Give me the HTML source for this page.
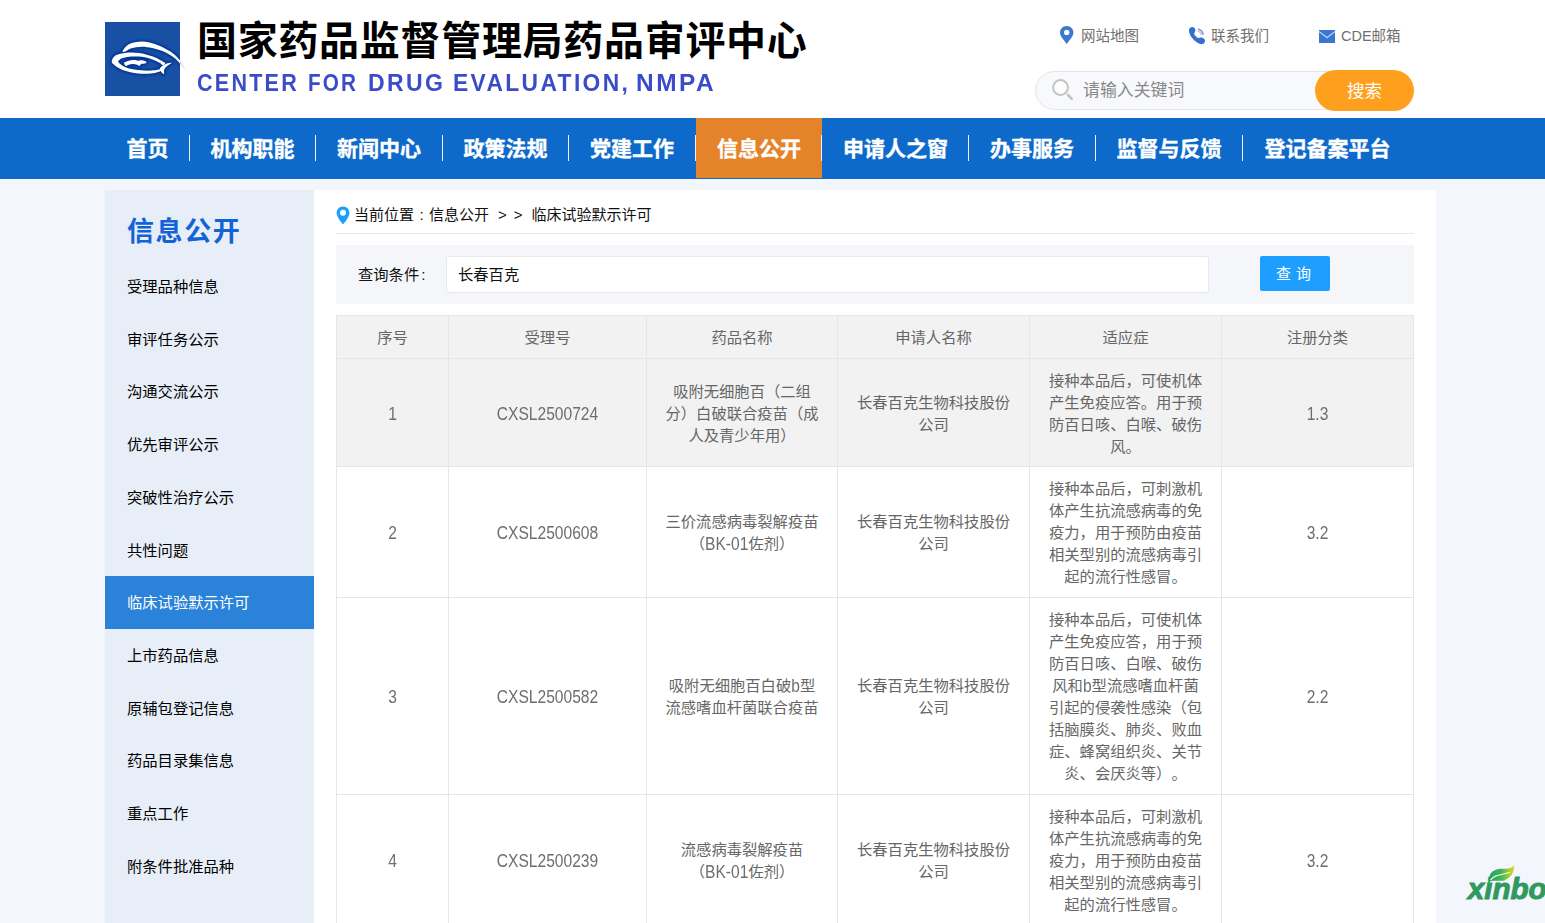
<!DOCTYPE html>
<html lang="zh-CN">
<head>
<meta charset="utf-8">
<title>国家药品监督管理局药品审评中心</title>
<style>
*{box-sizing:border-box;margin:0;padding:0}
html,body{width:1545px;height:923px;overflow:hidden;background:#f3f7fd}
body{font-family:"Liberation Sans","Noto Sans CJK SC",sans-serif;color:#333;position:relative;text-spacing-trim:space-all}
.abs{position:absolute}
#header{position:absolute;left:0;top:0;width:1545px;height:118px;background:#fff}
#logo{position:absolute;left:105px;top:22px}
#title-cn{position:absolute;left:197px;top:14px;height:54px;line-height:54px;font-size:40px;font-weight:700;color:#000;letter-spacing:0.7px;white-space:nowrap}
#title-en{position:absolute;left:0;top:69px;height:28px;line-height:28px;font-size:24px;font-weight:bold;color:#3a4cc8;letter-spacing:2.5px;white-space:nowrap}
#title-en span{position:absolute;top:0;transform-origin:0 0}
.toplink{position:absolute;top:25px;height:22px;line-height:22px;font-size:14.5px;color:#707070;white-space:nowrap}
#search{position:absolute;left:1035px;top:71px;width:330px;height:39px;border:1px solid #e4e4e4;border-radius:20px;background:#f8f9fd}
#search span{position:absolute;left:47px;top:0;line-height:37px;font-size:16.9px;color:#888}
#sbtn{position:absolute;left:1315px;top:70px;width:99px;height:41px;border-radius:21px;background:#ff9f1e;color:#fff;font-size:17.5px;line-height:43px;text-align:center}
#nav{position:absolute;left:0;top:118px;width:1545px;height:61px;background:#0d6aca}
.nv{-webkit-text-stroke:0.35px #fff;position:absolute;top:0;height:61px;line-height:62px;font-size:21px;font-weight:bold;color:#fff;text-align:center;white-space:nowrap}
.sep{position:absolute;top:17px;width:1px;height:26px;background:#eef4fc}
#side{position:absolute;left:105px;top:190px;width:209px;height:740px;background:#e8eef7}
#side h2{position:absolute;left:22px;top:24px;font-size:27px;line-height:36px;font-weight:bold;color:#1262d8;letter-spacing:1.6px;white-space:nowrap}
.mi{position:absolute;left:0;width:209px;height:53px;line-height:53px;padding-left:22px;font-size:15.3px;color:#000;white-space:nowrap}
.mi.on{background:#2a82d9;color:#fff}
#main{position:absolute;left:314px;top:190px;width:1122px;height:740px;background:#fff}

#crumb{position:absolute;left:40px;top:14px;height:22px;line-height:22px;font-size:15px;color:#111;white-space:nowrap}
#crumbline{position:absolute;left:22px;top:43px;width:1078px;height:1px;background:#e6e6e6}
#query{position:absolute;left:22px;top:55px;width:1078px;height:59px;background:#f5f6fa}
#query label{position:absolute;left:22px;top:19px;line-height:22px;font-size:15.3px;color:#111;white-space:nowrap}
#qinput{position:absolute;left:110px;top:11px;width:763px;height:37px;border:1px solid #e9e9e9;border-radius:3px;background:#fff;padding-left:11px;line-height:36px;font-size:15.3px;color:#111}
#qbtn{padding-right:3px;word-spacing:1px;position:absolute;left:924px;top:11px;width:70px;height:35px;background:#1e9fff;border-radius:2px;color:#fff;font-size:15px;line-height:35px;text-align:center}
table{position:absolute;left:22px;top:125px;width:1078px;border-collapse:collapse;table-layout:fixed}
th,td{border:1px solid #e6e6e6;font-size:15.3px;line-height:22px;color:#666;text-align:center;font-weight:normal;padding:2px 17px 0;vertical-align:middle}
thead tr,tr.hov{background:#f2f2f2}
.l{display:inline-block;font-size:15.6px;transform:scaleY(1.13);color:#6e6e6e}
</style>
</head>
<body>
<div id="header">
  <svg id="logo" width="90" height="74" viewBox="0 0 90 74" style="overflow:visible">
    <defs>
      <linearGradient id="lg1" gradientUnits="userSpaceOnUse" x1="60" y1="0" x2="83" y2="0"><stop offset="0" stop-color="#fff"/><stop offset="0.645" stop-color="#fff"/><stop offset="0.66" stop-color="#cbd7ef"/><stop offset="1" stop-color="#dfe7f6" stop-opacity="0.15"/></linearGradient>
      <filter id="lb" x="-10%" y="-10%" width="120%" height="120%"><feGaussianBlur stdDeviation="0.5"/></filter>
      <filter id="lb2" x="-20%" y="-20%" width="140%" height="140%"><feGaussianBlur stdDeviation="1"/></filter>
      <clipPath id="lc"><rect width="75" height="74"/></clipPath>
    </defs>
    <rect width="75" height="74" fill="#1850a4"/>
    <g clip-path="url(#lc)" filter="url(#lb2)" fill="#06308f" stroke="#06308f" stroke-width="3.200" opacity="0.9">
      <path d="M17.56 29.08C18.17 27.87 21.03 23.88 23.80 22.32C26.57 20.76 30.73 20.02 34.20 19.72C37.67 19.42 41.13 19.81 44.60 20.50C48.07 21.19 51.54 22.36 55.00 23.88C58.47 25.40 62.46 27.61 65.40 29.60C68.35 31.59 70.52 33.59 72.68 35.84C74.85 38.09 77.02 40.78 78.40 43.12C79.79 45.46 81.26 49.75 81.00 49.88C80.74 50.01 78.75 46.20 76.84 43.90C74.94 41.60 72.60 38.48 69.56 36.10C66.53 33.72 62.37 31.27 58.64 29.60C54.92 27.93 50.84 26.89 47.20 26.06C43.56 25.24 40.27 24.63 36.80 24.66C33.33 24.69 29.17 25.40 26.40 26.22C23.63 27.04 21.63 29.12 20.16 29.60C18.69 30.08 16.95 30.29 17.56 29.08Z"/><path d="M6.90 38.44C7.33 36.97 8.42 34.54 10.80 33.24C13.18 31.94 17.30 31.03 21.20 30.64C25.10 30.25 29.87 30.29 34.20 30.90C38.53 31.51 43.73 33.11 47.20 34.28C50.67 35.45 52.84 36.79 55.00 37.92C57.17 39.05 59.77 40.17 60.20 41.04C60.64 41.91 58.47 43.12 57.60 43.12C56.74 43.12 56.74 41.99 55.00 41.04C53.27 40.09 50.24 38.44 47.20 37.40C44.17 36.36 40.27 35.28 36.80 34.80C33.33 34.32 29.43 34.37 26.40 34.54C23.37 34.71 20.55 35.32 18.60 35.84C16.65 36.36 15.61 37.04 14.70 37.66C13.79 38.28 13.10 38.89 13.14 39.59C13.18 40.28 14.05 41.06 14.96 41.82C15.87 42.58 16.69 43.29 18.60 44.16C20.51 45.03 22.93 46.28 26.40 47.02C29.87 47.76 35.50 48.36 39.40 48.58C43.30 48.80 47.29 48.54 49.80 48.32C52.32 48.10 53.62 47.11 54.48 47.28C55.35 47.45 55.78 48.75 55.00 49.36C54.22 49.97 52.40 50.53 49.80 50.92C47.20 51.31 43.30 51.79 39.40 51.70C35.50 51.61 30.30 51.14 26.40 50.40C22.50 49.66 19.03 48.67 16.00 47.28C12.97 45.89 9.72 43.55 8.20 42.08C6.68 40.61 6.47 39.91 6.90 38.44Z"/><path d="M66.96 40.78C66.83 40.42 63.32 41.08 61.76 41.56C60.20 42.04 58.73 42.86 57.60 43.64C56.48 44.42 55.35 45.29 55.00 46.24C54.66 47.19 54.87 48.36 55.52 49.36C56.17 50.36 58.31 52.35 58.90 52.22C59.49 52.09 58.86 49.62 59.06 48.58C59.26 47.54 59.52 46.79 60.10 45.98C60.68 45.18 61.40 44.61 62.54 43.75C63.69 42.88 67.09 41.15 66.96 40.78Z"/><path d="M19.12 41.56C18.99 40.89 19.21 40.52 20.16 40.00C21.11 39.48 23.19 38.77 24.84 38.44C26.49 38.11 28.74 37.98 30.04 38.02C31.34 38.07 31.60 38.67 32.64 38.70C33.68 38.73 35.07 38.14 36.28 38.18C37.49 38.22 39.05 38.61 39.92 38.96C40.79 39.31 41.46 39.83 41.48 40.26C41.50 40.69 40.81 41.30 40.03 41.56C39.25 41.82 37.77 41.43 36.80 41.82C35.83 42.21 34.98 43.73 34.20 43.90C33.42 44.07 33.25 43.16 32.12 42.86C30.99 42.56 28.83 42.08 27.44 42.08C26.05 42.08 24.88 42.53 23.80 42.86C22.72 43.19 21.72 44.27 20.94 44.06C20.16 43.84 19.25 42.24 19.12 41.56Z"/>
    </g>
    <g filter="url(#lb)">
      <path d="M17.56 29.08C18.17 27.87 21.03 23.88 23.80 22.32C26.57 20.76 30.73 20.02 34.20 19.72C37.67 19.42 41.13 19.81 44.60 20.50C48.07 21.19 51.54 22.36 55.00 23.88C58.47 25.40 62.46 27.61 65.40 29.60C68.35 31.59 70.52 33.59 72.68 35.84C74.85 38.09 77.02 40.78 78.40 43.12C79.79 45.46 81.26 49.75 81.00 49.88C80.74 50.01 78.75 46.20 76.84 43.90C74.94 41.60 72.60 38.48 69.56 36.10C66.53 33.72 62.37 31.27 58.64 29.60C54.92 27.93 50.84 26.89 47.20 26.06C43.56 25.24 40.27 24.63 36.80 24.66C33.33 24.69 29.17 25.40 26.40 26.22C23.63 27.04 21.63 29.12 20.16 29.60C18.69 30.08 16.95 30.29 17.56 29.08Z" fill="url(#lg1)"/>
      <path d="M6.90 38.44C7.33 36.97 8.42 34.54 10.80 33.24C13.18 31.94 17.30 31.03 21.20 30.64C25.10 30.25 29.87 30.29 34.20 30.90C38.53 31.51 43.73 33.11 47.20 34.28C50.67 35.45 52.84 36.79 55.00 37.92C57.17 39.05 59.77 40.17 60.20 41.04C60.64 41.91 58.47 43.12 57.60 43.12C56.74 43.12 56.74 41.99 55.00 41.04C53.27 40.09 50.24 38.44 47.20 37.40C44.17 36.36 40.27 35.28 36.80 34.80C33.33 34.32 29.43 34.37 26.40 34.54C23.37 34.71 20.55 35.32 18.60 35.84C16.65 36.36 15.61 37.04 14.70 37.66C13.79 38.28 13.10 38.89 13.14 39.59C13.18 40.28 14.05 41.06 14.96 41.82C15.87 42.58 16.69 43.29 18.60 44.16C20.51 45.03 22.93 46.28 26.40 47.02C29.87 47.76 35.50 48.36 39.40 48.58C43.30 48.80 47.29 48.54 49.80 48.32C52.32 48.10 53.62 47.11 54.48 47.28C55.35 47.45 55.78 48.75 55.00 49.36C54.22 49.97 52.40 50.53 49.80 50.92C47.20 51.31 43.30 51.79 39.40 51.70C35.50 51.61 30.30 51.14 26.40 50.40C22.50 49.66 19.03 48.67 16.00 47.28C12.97 45.89 9.72 43.55 8.20 42.08C6.68 40.61 6.47 39.91 6.90 38.44Z" fill="#fff"/>
      <path d="M66.96 40.78C66.83 40.42 63.32 41.08 61.76 41.56C60.20 42.04 58.73 42.86 57.60 43.64C56.48 44.42 55.35 45.29 55.00 46.24C54.66 47.19 54.87 48.36 55.52 49.36C56.17 50.36 58.31 52.35 58.90 52.22C59.49 52.09 58.86 49.62 59.06 48.58C59.26 47.54 59.52 46.79 60.10 45.98C60.68 45.18 61.40 44.61 62.54 43.75C63.69 42.88 67.09 41.15 66.96 40.78Z" fill="#fff"/>
      <path d="M19.12 41.56C18.99 40.89 19.21 40.52 20.16 40.00C21.11 39.48 23.19 38.77 24.84 38.44C26.49 38.11 28.74 37.98 30.04 38.02C31.34 38.07 31.60 38.67 32.64 38.70C33.68 38.73 35.07 38.14 36.28 38.18C37.49 38.22 39.05 38.61 39.92 38.96C40.79 39.31 41.46 39.83 41.48 40.26C41.50 40.69 40.81 41.30 40.03 41.56C39.25 41.82 37.77 41.43 36.80 41.82C35.83 42.21 34.98 43.73 34.20 43.90C33.42 44.07 33.25 43.16 32.12 42.86C30.99 42.56 28.83 42.08 27.44 42.08C26.05 42.08 24.88 42.53 23.80 42.86C22.72 43.19 21.72 44.27 20.94 44.06C20.16 43.84 19.25 42.24 19.12 41.56Z" fill="#fff"/>
    </g>
  </svg>
  <div id="title-cn">国家药品监督管理局药品审评中心</div>
  <div id="title-en"><span style="left:196.6px;transform:scaleX(0.897)">CENTER</span> <span style="left:307.8px;transform:scaleX(0.863)">FOR</span> <span style="left:368.2px;transform:scaleX(0.96)">DRUG</span> <span style="left:452.8px;transform:scaleX(0.95)">EVALUATION,</span> <span style="left:636.2px;transform:scaleX(1.018)">NMPA</span></div>
  <svg class="abs" style="left:1060px;top:26px" width="14" height="18" viewBox="0 0 14 18"><path d="M6.7 0C3 0 0 2.9 0 6.5c0 2 .9 3.8 2.2 5.6L6.7 18l4.5-5.9c1.3-1.800 2.200-3.600 2.200-5.600C13.400 2.900 10.400 0 6.700 0z" fill="#3c78cf"/><circle cx="6.700" cy="6.400" r="2.700" fill="#fff"/></svg>
  <svg class="abs" style="left:1189px;top:27px" width="17" height="18" viewBox="0 0 17 18"><path d="M3.200 0C5 0 6.500 1.400 6.400 3.400C6.300 4.600 5.600 5.400 5.200 6.200C5 6.900 5.600 7.800 6.600 8.900C7.600 10 8.600 10.800 9.300 10.900C10.200 11 10.800 10.600 12 10.500C14 10.400 16 11.800 16 13.800C16 15.800 14.400 17.200 12.400 17.200C10.400 17.200 6.500 15 3.800 11.800C1.200 8.800 0 5.600 0 3.400C0 1.400 1.400 0 3.200 0Z" fill="#3470cd"/><path d="M8.67 3.86A5.4 5.4 0 0 1 12.28 7.88" fill="none" stroke="#b3c6f1" stroke-width="1.300"/><path d="M9.01 1.98A7.3 7.3 0 0 1 14.19 7.73" fill="none" stroke="#8496da" stroke-width="1.700"/></svg>
  <svg class="abs" style="left:1319px;top:30px" width="16" height="13" viewBox="0 0 16 13"><rect width="16" height="13" fill="#3a75d0"/><path d="M0 1.500L8 7.600L16 1.500" fill="none" stroke="#b4cff2" stroke-width="1.300"/></svg>
  <div class="toplink" style="left:1081px">网站地图</div>
  <div class="toplink" style="left:1211px">联系我们</div>
  <div class="toplink" style="left:1341px">CDE邮箱</div>
  <div id="search"><span>请输入关键词</span></div>
  <svg class="abs" style="left:1051px;top:78px" width="24" height="24" viewBox="0 0 24 24"><circle cx="9.500" cy="9.500" r="7.400" fill="#fdfdfe" stroke="#c2c4c2" stroke-width="2"/><path d="M17 17L20.800 20.800" stroke="#c2c4c2" stroke-width="2.600" stroke-linecap="round"/></svg>
  <div id="sbtn">搜索</div>
</div>
<div id="nav">
  <div class="nv" style="left:105px;width:85px">首页</div>
  <div class="nv" style="left:189px;width:127px">机构职能</div>
  <div class="nv" style="left:315px;width:128px">新闻中心</div>
  <div class="nv" style="left:442px;width:127px">政策法规</div>
  <div class="nv" style="left:568px;width:128px">党建工作</div>
  <div class="nv" style="left:696px;width:126px;height:60px;background:#e5832a">信息公开</div>
  <div class="nv" style="left:822px;width:147px">申请人之窗</div>
  <div class="nv" style="left:968px;width:128px">办事服务</div>
  <div class="nv" style="left:1095px;width:148px">监督与反馈</div>
  <div class="nv" style="left:1242px;width:171px">登记备案平台</div>
  <i class="sep" style="left:189px"></i>
  <i class="sep" style="left:315px"></i>
  <i class="sep" style="left:442px"></i>
  <i class="sep" style="left:568px"></i>
  <i class="sep" style="left:695px"></i>
  <i class="sep" style="left:821px"></i>
  <i class="sep" style="left:968px"></i>
  <i class="sep" style="left:1095px"></i>
  <i class="sep" style="left:1242px"></i>
</div>
<div id="side">
  <h2>信息公开</h2>
  <div class="mi" style="top:70.0px">受理品种信息</div>
  <div class="mi" style="top:122.7px">审评任务公示</div>
  <div class="mi" style="top:175.4px">沟通交流公示</div>
  <div class="mi" style="top:228.1px">优先审评公示</div>
  <div class="mi" style="top:280.8px">突破性治疗公示</div>
  <div class="mi" style="top:333.5px">共性问题</div>
  <div class="mi on" style="top:386.2px">临床试验默示许可</div>
  <div class="mi" style="top:438.9px">上市药品信息</div>
  <div class="mi" style="top:491.6px">原辅包登记信息</div>
  <div class="mi" style="top:544.3px">药品目录集信息</div>
  <div class="mi" style="top:597.0px">重点工作</div>
  <div class="mi" style="top:649.7px">附条件批准品种</div>
</div>
<div id="main">
  <svg class="abs" style="left:22px;top:16px" width="14" height="19" viewBox="0 0 14 19"><path d="M7 0.5C3.4 0.5 0.6 3.3 0.6 6.9c0 4.6 6.4 11.3 6.4 11.3s6.4-6.7 6.4-11.3C13.4 3.3 10.6 0.5 7 0.5z" fill="#1e9fff"/><circle cx="7" cy="6.8" r="3" fill="#fff"/></svg>
  <div id="crumb">当前位置<span style="display:inline-block;width:15px;text-align:center">:</span>信息公开<span style="margin-left:9px">&gt;</span><span style="margin-left:7px">&gt;</span><span style="margin-left:9px">临床试验默示许可</span></div>
  <div id="crumbline"></div>
  <div id="query"><label>查询条件<span style="margin-left:2px">:</span></label><div id="qinput">长春百克</div><div id="qbtn">查 询</div></div>
  <table>
  <colgroup><col style="width:112px"><col style="width:198px"><col style="width:191px"><col style="width:192px"><col style="width:192px"><col style="width:192px"></colgroup>
  <thead><tr style="height:43px"><th>序号</th><th>受理号</th><th>药品名称</th><th>申请人名称</th><th>适应症</th><th>注册分类</th></tr></thead>
  <tbody>
  <tr class="hov" style="height:108px"><td><span class="l">1</span></td><td><span class="l">CXSL2500724</span></td><td>吸附无细胞百（二组<br>分）白破联合疫苗（成<br>人及青少年用）</td><td>长春百克生物科技股份<br>公司</td><td>接种本品后，可使机体<br>产生免疫应答。用于预<br>防百日咳、白喉、破伤<br>风。</td><td><span class="l">1.3</span></td></tr>
  <tr style="height:131px"><td><span class="l">2</span></td><td><span class="l">CXSL2500608</span></td><td>三价流感病毒裂解疫苗<br>（<span class="l">BK-01</span>佐剂）</td><td>长春百克生物科技股份<br>公司</td><td>接种本品后，可刺激机<br>体产生抗流感病毒的免<br>疫力，用于预防由疫苗<br>相关型别的流感病毒引<br>起的流行性感冒。</td><td><span class="l">3.2</span></td></tr>
  <tr style="height:197px"><td><span class="l">3</span></td><td><span class="l">CXSL2500582</span></td><td>吸附无细胞百白破<span class="l">b</span>型<br>流感嗜血杆菌联合疫苗</td><td>长春百克生物科技股份<br>公司</td><td>接种本品后，可使机体<br>产生免疫应答，用于预<br>防百日咳、白喉、破伤<br>风和<span class="l">b</span>型流感嗜血杆菌<br>引起的侵袭性感染（包<br>括脑膜炎、肺炎、败血<br>症、蜂窝组织炎、关节<br>炎、会厌炎等）。</td><td><span class="l">2.2</span></td></tr>
  <tr style="height:131px"><td><span class="l">4</span></td><td><span class="l">CXSL2500239</span></td><td>流感病毒裂解疫苗<br>（<span class="l">BK-01</span>佐剂）</td><td>长春百克生物科技股份<br>公司</td><td>接种本品后，可刺激机<br>体产生抗流感病毒的免<br>疫力，用于预防由疫苗<br>相关型别的流感病毒引<br>起的流行性感冒。</td><td><span class="l">3.2</span></td></tr>
  </tbody></table>
</div>
<svg class="abs" style="left:1455px;top:855px;overflow:visible" width="110" height="55" viewBox="0 0 110 55">
  <defs><linearGradient id="lf" gradientUnits="userSpaceOnUse" x1="35" y1="0" x2="59" y2="0"><stop offset="0" stop-color="#27a35e"/><stop offset="0.45" stop-color="#3db356"/><stop offset="0.8" stop-color="#a6cf2e"/><stop offset="1" stop-color="#d4dc1e"/></linearGradient></defs>
  <text x="12.700" y="44.300" font-family="Liberation Sans, sans-serif" font-size="30" font-weight="bold" font-style="italic" fill="#2f9a5e" stroke="#2f9a5e" stroke-width="1" textLength="79" lengthAdjust="spacingAndGlyphs">xinbo</text>
  <path d="M32.200 28.600L34 24.500C34.300 22.500 34.600 20.800 35.200 19.400C36 17.800 37.200 16.600 38.700 15.800C40.200 14.900 41.800 14.300 43.500 14C46.800 13.500 50.500 13.700 53.600 13.400C55.600 13 57.400 12.200 58.700 10.800C59.200 11.600 59.300 12.500 59 13.400C58.800 15.400 58.200 17.300 57.200 19.100C56 21 54.400 22.600 52.400 23.800C51.300 24.600 50.100 25.300 48.900 25.700L35.800 25.700L33.400 29Z" fill="url(#lf)"/>
  <path d="M35.600 24.800C37.200 23 39 21.800 41.100 20.900C45.500 19.600 50.400 18.900 54.800 17.300" fill="none" stroke="#f3f7fd" stroke-width="1.200"/>
</svg>
</body>
</html>
